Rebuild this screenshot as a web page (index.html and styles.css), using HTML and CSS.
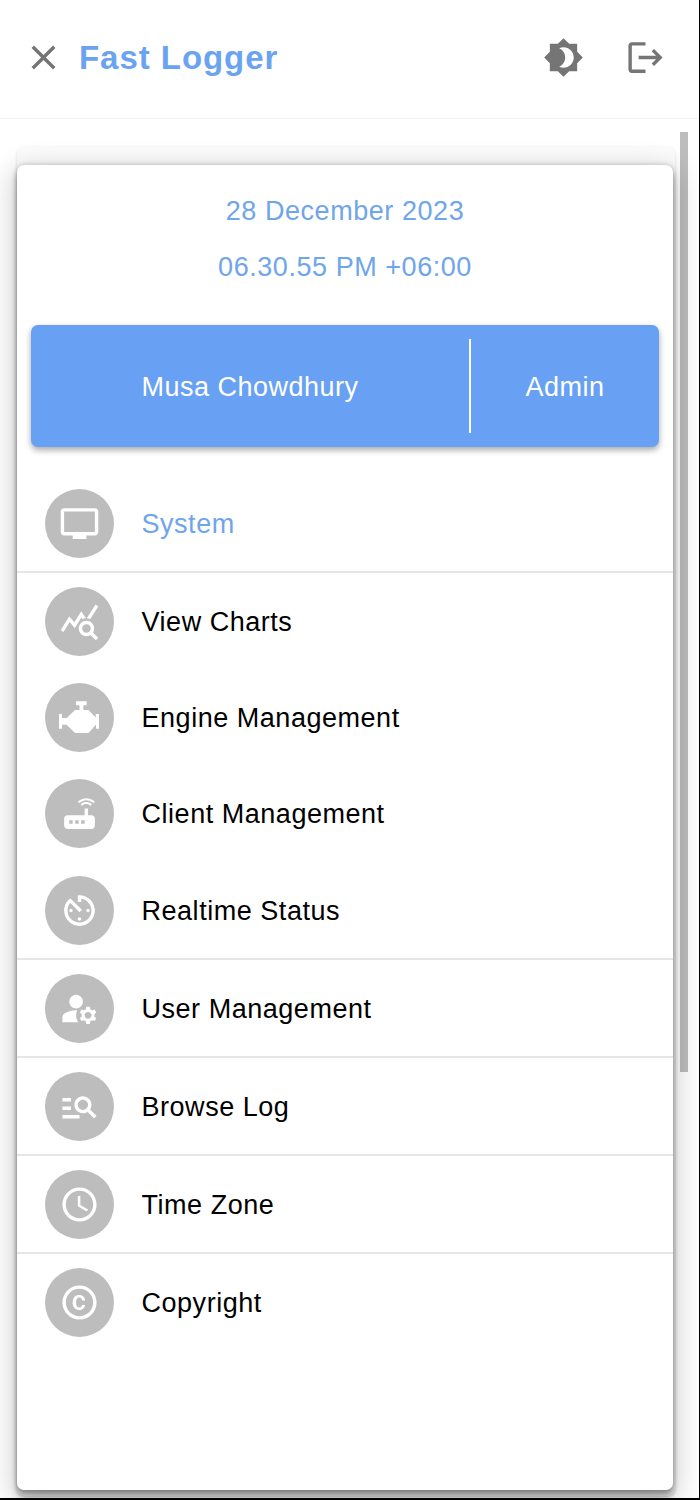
FILE: index.html
```html
<!DOCTYPE html>
<html lang="en">
<head>
<meta charset="utf-8">
<title>Fast Logger</title>
<link rel="stylesheet" href="styles.css">
</head>
<body>
<div class="page">
  <header class="topbar">
    <svg class="tool close" viewBox="0 0 24 24"><path d="M19 6.41L17.59 5 12 10.59 6.41 5 5 6.41 10.59 12 5 17.59 6.41 19 12 13.41 17.59 19 19 17.59 13.41 12z"/></svg>
    <h1 class="title">Fast Logger</h1>
    <svg class="tool theme" viewBox="0 0 24 24"><path fill-rule="evenodd" d="M20 8.69V4h-4.69L12 .69 8.69 4H4v4.69L.69 12 4 15.31V20h4.69L12 23.31 15.31 20H20v-4.69L23.31 12 20 8.69zM12 18c-.89 0-1.74-.2-2.5-.55C11.56 16.5 13 14.42 13 12s-1.44-4.5-3.5-5.45C10.26 6.2 11.11 6 12 6c3.31 0 6 2.69 6 6s-2.69 6-6 6z"/></svg>
    <svg class="tool logout" viewBox="0 0 24 24"><path d="M17 7l-1.41 1.41L18.17 11H8v2h10.17l-2.58 2.58L17 17l5-5zM4 5h8V3H4c-1.1 0-2 .9-2 2v14c0 1.1.9 2 2 2h8v-2H4V5z"/></svg>
  </header>
  <main class="content">
    <div class="back-card">
      <section class="card">
        <div class="stamp">
          <p class="stamp-line">28 December 2023</p>
          <p class="stamp-line">06.30.55 PM +06:00</p>
        </div>
        <div class="user">
          <div class="user-name">Musa Chowdhury</div>
          <div class="user-role">Admin</div>
        </div>
        <nav class="menu">
          <div class="group">
            <a class="row active"><span class="disc"><svg viewBox="0 0 24 24"><path d="M21 3H3c-1.1 0-2 .9-2 2v12c0 1.1.9 2 2 2h5v2h8v-2h5c1.100 0 1.990-.9 1.990-2L23 5c0-1.100-.9-2-2-2zm0 14H3V5h18v12z"/></svg></span><span class="label">System</span></a>
          </div>
          <div class="group">
            <a class="row"><span class="disc"><svg viewBox="0 0 24 24"><path d="M19.88 18.47c.44-.7.7-1.51.7-2.39 0-2.49-2.01-4.5-4.5-4.5s-4.5 2.01-4.5 4.5 2.01 4.5 4.49 4.5c.88 0 1.7-.26 2.39-.7L21.58 23 23 21.58l-3.12-3.11zm-3.8.11c-1.38 0-2.5-1.12-2.5-2.5s1.12-2.5 2.5-2.5 2.5 1.12 2.5 2.5-1.12 2.5-2.5 2.5zm-.36-8.5c-.74.02-1.45.18-2.1.45l-.55-.83-3.8 6.18-3.01-3.52-3.63 5.81L1 17l5-8 3 3.5L13 6l2.72 4.08zm2.59.5c-.64-.28-1.33-.45-2.05-.49L21.38 2 23 3.18l-4.69 7.4z"/></svg></span><span class="label">View Charts</span></a>
            <a class="row"><span class="disc"><svg viewBox="14 14 41 41"><path d="M31 18.3h10.7v4h-3.300V27h5.100l7.200 7.500V31h3.300v14.700H51V42h-.3L43.500 50H30l-8.300-8.300H17v4h-3.300V31H17v4h4.700L30 27h4.500v-4.700H31z"/></svg></span><span class="label">Engine Management</span></a>
            <a class="row"><span class="disc"><svg viewBox="0 0 24 24"><path d="M20.2 5.900l.8-.8C19.600 3.700 17.800 3 16 3s-3.600.7-5 2.100l.8.8C13 4.800 14.500 4.200 16 4.200s3 .6 4.200 1.700zm-.9.8c-.9-.9-2.100-1.400-3.300-1.400s-2.400.5-3.300 1.400l.8.8c.7-.7 1.600-1 2.500-1 .9 0 1.800.3 2.500 1l.8-.8zM19 13h-2V9h-2v4H5c-1.100 0-2 .9-2 2v4c0 1.100.9 2 2 2h14c1.100 0 2-.9 2-2v-4c0-1.100-.9-2-2-2zM8 18H6v-2h2v2zm3.500 0h-2v-2h2v2zm3.500 0h-2v-2h2v2z"/></svg></span><span class="label">Client Management</span></a>
            <a class="row"><span class="disc"><svg viewBox="0 0 24 24"><path d="M11 17c0 .55.45 1 1 1s1-.45 1-1-.45-1-1-1-1 .45-1 1zm0-14v4h2V5.080c3.390.49 6 3.390 6 6.920 0 3.870-3.130 7-7 7s-7-3.130-7-7c0-1.680.59-3.220 1.580-4.500L12 13l1.410-1.410-6.800-6.800v.02C4.420 6.450 3 9.050 3 12c0 4.970 4.020 9 9 9 4.970 0 9-4.030 9-9s-4.030-9-9-9h-1zm7 9c0-.55-.45-1-1-1s-1 .45-1 1 .45 1 1 1 1-.45 1-1zM6 12c0 .55.45 1 1 1s1-.45 1-1-.45-1-1-1-1 .45-1 1z"/></svg></span><span class="label">Realtime Status</span></a>
          </div>
          <div class="group">
            <a class="row"><span class="disc"><svg viewBox="0 0 24 24"><circle cx="10" cy="8" r="4"/><path d="M10.670 13.020C10.450 13.010 10.230 13 10 13c-2.420 0-4.680.67-6.610 1.820C2.510 15.340 2 16.320 2 17.350V20h9.260C10.470 18.870 10 17.490 10 16c0-1.070.25-2.070.67-2.980z"/><path fill-rule="evenodd" d="M20.750 16c0-.22-.03-.42-.06-.63l1.140-1.010-1-1.730-1.450.49c-.32-.27-.68-.48-1.080-.63L18 11h-2l-.3 1.490c-.4.15-.76.36-1.080.63l-1.450-.49-1 1.730 1.140 1.010c-.03.21-.06.41-.06.63s.03.42.06.63l-1.140 1.010 1 1.730 1.450-.49c.32.27.68.48 1.080.63L16 21h2l.3-1.490c.4-.15.76-.36 1.080-.63l1.450.49 1-1.730-1.140-1.010c.03-.21.06-.41.06-.63zM17 18c-1.100 0-2-.9-2-2s.9-2 2-2 2 .9 2 2-.9 2-2 2z"/></svg></span><span class="label">User Management</span></a>
          </div>
          <div class="group">
            <a class="row"><span class="disc"><svg viewBox="0 0 24 24"><path d="M7 9H2V7h5v2zm0 3H2v2h5v-2zm13.590 7l-3.830-3.830c-.8.52-1.740.83-2.760.83-2.760 0-5-2.240-5-5s2.240-5 5-5 5 2.240 5 5c0 1.020-.31 1.960-.83 2.750L22 17.590 20.590 19zM17 11c0-1.650-1.350-3-3-3s-3 1.350-3 3 1.350 3 3 3 3-1.350 3-3zM2 19h10v-2H2v2z"/></svg></span><span class="label">Browse Log</span></a>
          </div>
          <div class="group">
            <a class="row"><span class="disc"><svg viewBox="0 0 24 24"><path d="M11.990 2C6.470 2 2 6.480 2 12s4.470 10 9.990 10C17.520 22 22 17.520 22 12S17.520 2 11.990 2zM12 20c-4.420 0-8-3.580-8-8s3.580-8 8-8 8 3.580 8 8-3.580 8-8 8zm.5-13H11v6l5.250 3.150.75-1.230-4.500-2.670z"/></svg></span><span class="label">Time Zone</span></a>
          </div>
          <div class="group">
            <a class="row"><span class="disc"><svg viewBox="0 0 24 24"><path d="M11.880 9.140c1.280.06 1.610 1.150 1.630 1.660h1.790c-.08-1.980-1.490-3.190-3.450-3.190C9.640 7.610 8 9 8 12.140c0 1.940.93 4.240 3.840 4.240 2.220 0 3.410-1.650 3.440-2.950h-1.790c-.03.59-.45 1.380-1.630 1.440-1.310-.04-1.860-1.060-1.860-2.730 0-2.890 1.280-2.980 1.880-3zM12 2C6.480 2 2 6.480 2 12s4.480 10 10 10 10-4.480 10-10S17.520 2 12 2zm0 18c-4.410 0-8-3.590-8-8s3.590-8 8-8 8 3.590 8 8-3.590 8-8 8z"/></svg></span><span class="label">Copyright</span></a>
          </div>
        </nav>
      </section>
    </div>
    <div class="scrollbar"></div>
  </main>
</div>
</body>
</html>
```

FILE: styles.css
```css
* { box-sizing: border-box; }
html, body { margin: 0; height: 100%; background: #000; }
body { font-family: "Liberation Sans", Arial, sans-serif; overflow: hidden; }

.page {
  width: 699px;
  height: 1498px;
  background: #fff;
  display: flex;
  flex-direction: column;
  overflow: hidden;
}

.topbar {
  flex: none;
  height: 119px;
  display: flex;
  align-items: center;
  border-bottom: 1px solid #f3f3f3;
  padding: 0 0 3px 23px;
}
.tool { width: 41px; height: 41px; fill: #757575; flex: none; }
.title {
  margin: 0 auto 0 15px;
  font-size: 33px;
  font-weight: 700;
  letter-spacing: .95px;
  color: #6aa3f0;
}
.theme { margin-right: 41px; }
.logout { margin-right: 33px; }

.content {
  flex: 1;
  min-height: 0;
  display: flex;
  align-items: flex-start;
  padding-left: 17px;
}

.back-card {
  flex: none;
  width: 658px;
  height: 1349px;
  margin-top: 28px;
  padding-top: 18px;
  background: #fcfcfc;
  border-radius: 8px;
  box-shadow: 0 1px 3px rgba(0,0,0,.14);
}
.card {
  width: 656px;
  height: 1325px;
  background: #fff;
  border-radius: 7px;
  box-shadow: 0 0 5px rgba(0,0,0,.22), 0 6px 6px rgba(0,0,0,.32), 0 8px 28px 4px rgba(0,0,0,.2);
  padding: 0 14px;
  display: flex;
  flex-direction: column;
}

.scrollbar {
  flex: none;
  width: 8px;
  height: 940px;
  margin: 13px 0 0 5px;
  background: rgba(0,0,0,.26);
}

.stamp { padding-top: 29px; text-align: center; }
.stamp-line {
  margin: 0 0 22px;
  font-size: 27px;
  line-height: 34px;
  letter-spacing: .55px;
  color: #6fa5ea;
}

.user {
  display: flex;
  align-items: center;
  height: 122px;
  margin-top: 19px;
  background: #68a1f3;
  border-radius: 7px;
  box-shadow: 0 3px 6px rgba(0,0,0,.35);
  color: #fff;
  font-size: 27px;
  letter-spacing: .5px;
  padding: 14px 0;
}
.user-name {
  width: 440px;
  height: 94px;
  padding-top: 2px;
  display: flex;
  align-items: center;
  justify-content: center;
  border-right: 2px solid #fff;
}
.user-role { flex: 1; padding-top: 2px; text-align: center; }

.menu { margin: 28px -14px 0; }
.group {
  display: flex;
  flex-direction: column;
  gap: .45px;
  border-bottom: 2px solid #e6e6e6;
}
.group:last-child { border-bottom: 0; }
.row {
  display: flex;
  align-items: center;
  gap: 27.500px;
  height: 96px;
  padding-left: 28px;
  font-size: 27px;
  letter-spacing: .53px;
  color: #000;
}
.label { padding-top: 2px; }
.active { color: #6fa5ea; }
.disc {
  width: 69px;
  height: 69px;
  flex: none;
  border-radius: 50%;
  background: #bdbdbd;
  display: flex;
  align-items: center;
  justify-content: center;
}
.disc svg { width: 41px; height: 41px; fill: #fff; }
```
